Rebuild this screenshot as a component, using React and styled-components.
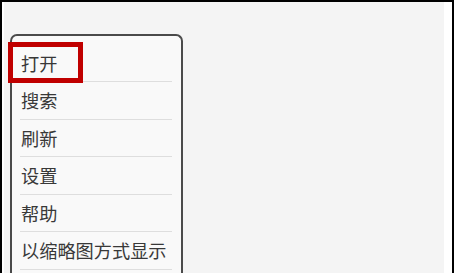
import React from "react";
import styled, { createGlobalStyle } from "styled-components";

const Global = createGlobalStyle`
  html, body { margin: 0; padding: 0; background: #000; }
  body { font-family: "Noto Sans CJK SC", "Noto Sans", sans-serif; }
  #root { width: 454px; height: 273px; overflow: hidden; }
`;

const Frame = styled.div`
  box-sizing: border-box;
  margin: 2px 2px 0 2px;
  height: 271px;
  background: #ffffff;
  padding: 0 8px 0 2px;
  overflow: hidden;
`;

const Screen = styled.div`
  position: relative;
  height: 100%;
  background: #f4f4f4;
  padding: 32px 0 0 6px;
  box-sizing: border-box;
  overflow: hidden;
`;

const Menu = styled.ul`
  list-style: none;
  margin: 0;
  width: 169px;
  box-sizing: content-box;
  padding: 8.5px 0 0 0;
  border: 2px solid #4a4a4a;
  border-bottom: none;
  border-radius: 7px 7px 0 0;
  background: #f9f9f9;
  height: 300px;
`;

const Item = styled.li`
  box-sizing: border-box;
  height: 37.5px;
  margin: 0 9px 0 8px;
  padding-left: 1px;
  display: flex;
  align-items: center;
  border-bottom: 1px solid #dedede;
  font-size: 18.2px;
  color: #383838;
  white-space: nowrap;
`;

const Highlight = styled.div`
  position: absolute;
  left: 4px;
  top: 40px;
  width: 75px;
  height: 41px;
  box-sizing: border-box;
  border: 5px solid #c00000;
  pointer-events: none;
`;

const items = ["打开", "搜索", "刷新", "设置", "帮助", "以缩略图方式显示"];

export default function App() {
  return (
    <>
      <Global />
      <Frame>
        <Screen>
          <Menu>
            {items.map((t) => (
              <Item key={t}>{t}</Item>
            ))}
          </Menu>
          <Highlight />
        </Screen>
      </Frame>
    </>
  );
}
